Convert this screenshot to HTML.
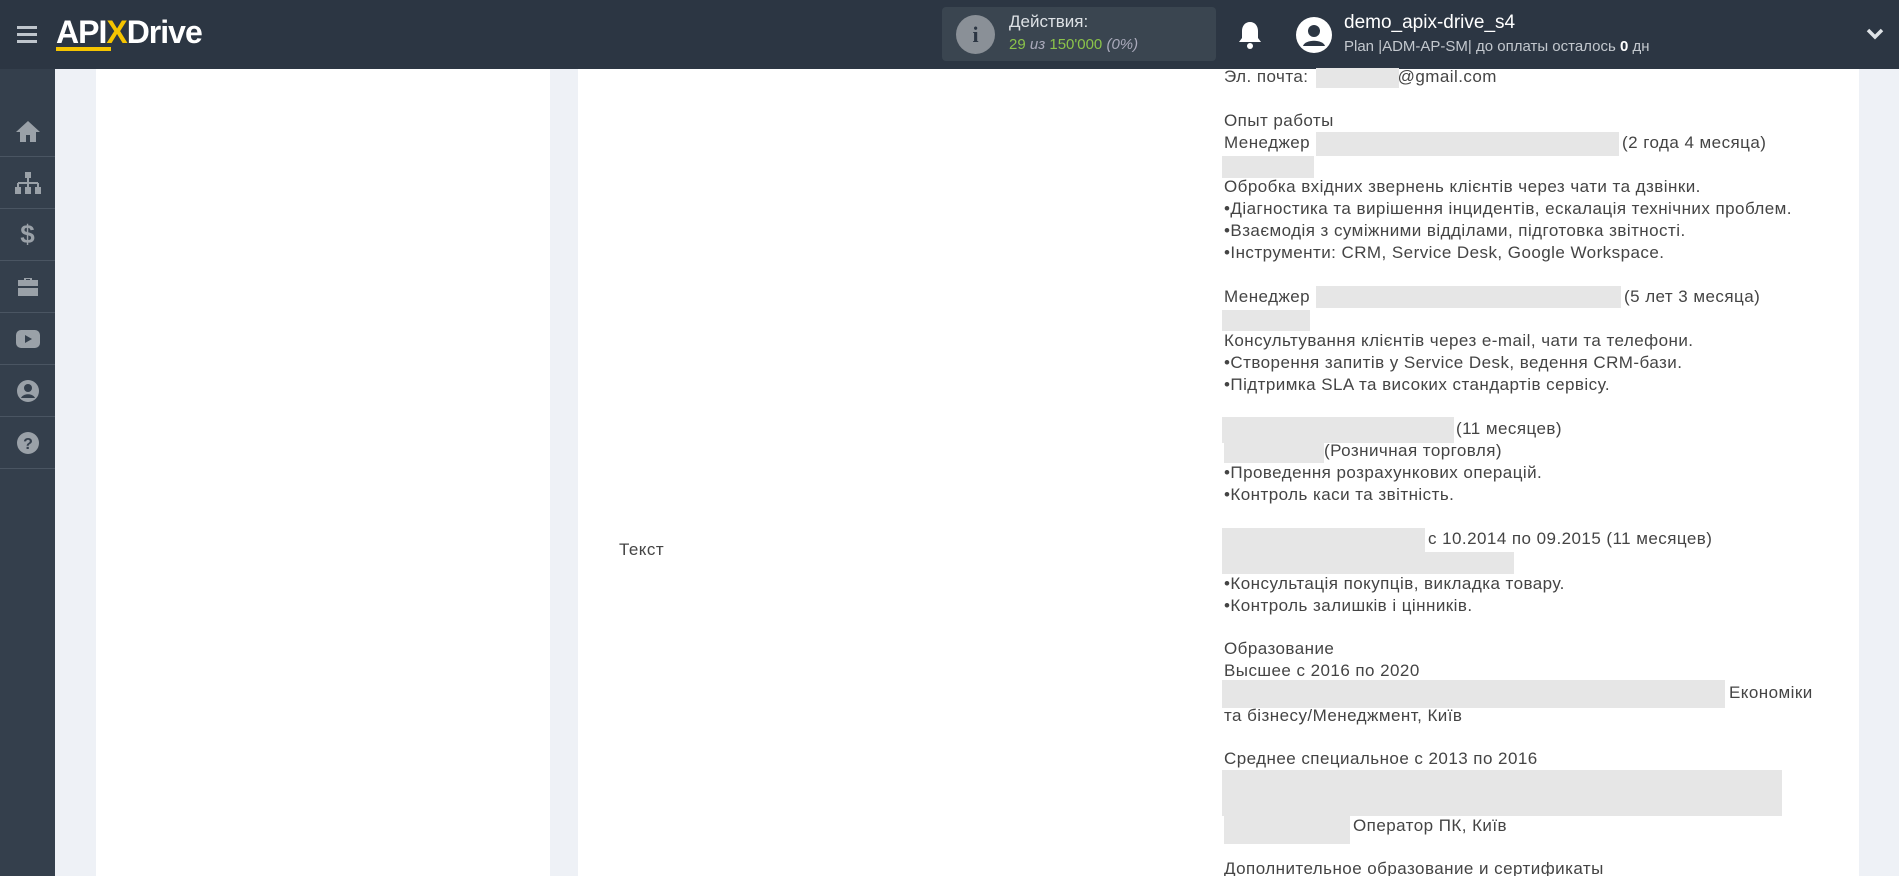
<!DOCTYPE html>
<html><head><meta charset="utf-8"><style>
*{margin:0;padding:0;box-sizing:border-box}
html,body{width:1899px;height:876px;overflow:hidden}
body{background:#eef1f6;font-family:"Liberation Sans",Arial,sans-serif;position:relative}
.hdr{position:absolute;left:0;top:0;width:1899px;height:69px;background:#2c3643}
.sb{position:absolute;left:0;top:69px;width:55px;height:820px;background:#343f4c}
.sb .it{position:absolute;left:0;width:55px;height:52px;border-bottom:1px solid #4a5562;display:flex;align-items:center;justify-content:center}
.p1{position:absolute;left:96px;top:69px;width:454px;height:820px;background:#fff}
.p2{position:absolute;left:578px;top:69px;width:1281px;height:820px;background:#fff}
.l{position:absolute;left:1224px;font-size:17px;letter-spacing:0.45px;color:#444;white-space:nowrap;line-height:22px;height:22px}
.b{position:absolute;background:#e6e6e6}
</style></head><body>
<div class="hdr">
  <div style="position:absolute;left:17px;top:26px;width:20px;height:3px;background:#bfc5cc;box-shadow:0 7px 0 #bfc5cc,0 14px 0 #bfc5cc"></div>
  <div style="position:absolute;left:56px;top:14px;font-size:32px;font-weight:bold;color:#fff;letter-spacing:-1px">API<span style="color:#f5c400">X</span>Drive</div>
  <div style="position:absolute;left:56px;top:47px;width:55px;height:4px;background:#f5c400"></div>
  <div style="position:absolute;left:942px;top:7px;width:274px;height:54px;background:#3a4550;border-radius:4px"></div>
  <div style="position:absolute;left:956px;top:15px;width:39px;height:39px;border-radius:50%;background:#8a9097;color:#2c3643;font-weight:bold;font-size:22px;text-align:center;line-height:39px;font-family:'Liberation Serif',serif">i</div>
  <div style="position:absolute;left:1009px;top:12px;font-size:17px;color:#dde1e5">Действия:</div>
  <div style="position:absolute;left:1009px;top:36px;font-size:15px;color:#8bc34a">29 <i style="color:#aab">из</i> 150'000 <i style="color:#aab">(0%)</i></div>
  <svg style="position:absolute;left:1237px;top:20px" width="26" height="30" viewBox="0 0 26 30"><path d="M13 2c-5 0-8 4-8 9v7l-3 4h22l-3-4v-7c0-5-3-9-8-9z" fill="#fff"/><circle cx="13" cy="26" r="3" fill="#fff"/></svg>
  <svg style="position:absolute;left:1295px;top:16px" width="38" height="38" viewBox="0 0 38 38"><circle cx="19" cy="19" r="18" fill="#fff"/><circle cx="19" cy="15" r="6" fill="#2c3643"/><path d="M8 30c2-7 20-7 22 0" fill="#2c3643"/></svg>
  <div style="position:absolute;left:1344px;top:12px;font-size:19px;color:#fff">demo_apix-drive_s4</div>
  <div style="position:absolute;left:1344px;top:38px;font-size:15px;color:#c3c8ce">Plan |ADM-AP-SM| до оплаты осталось <b style="color:#fff">0</b> дн</div>
  <svg style="position:absolute;left:1866px;top:27px" width="18" height="14" viewBox="0 0 18 14"><path d="M2 3l7 7 7-7" stroke="#dfe3e7" stroke-width="3.5" fill="none"/></svg>
</div>
<div class="sb">
  <div class="it" style="top:36px"><svg width="26" height="24" viewBox="0 0 26 24"><path d="M13 2L1 13h4v10h6v-7h4v7h6V13h4z" fill="#9aa1a8"/></svg></div>
  <div class="it" style="top:88px"><svg width="28" height="24" viewBox="0 0 28 24"><rect x="11" y="1" width="6" height="6" fill="#9aa1a8"/><path d="M14 7v5M4 12h20M4 12v4M14 12v4M24 12v4" stroke="#9aa1a8" stroke-width="2"/><rect x="1" y="16" width="6" height="7" fill="#9aa1a8"/><rect x="11" y="16" width="6" height="7" fill="#9aa1a8"/><rect x="21" y="16" width="6" height="7" fill="#9aa1a8"/></svg></div>
  <div class="it" style="top:140px;font-size:26px;font-weight:bold;color:#9aa1a8">$</div>
  <div class="it" style="top:192px"><svg width="24" height="22" viewBox="0 0 24 22"><path d="M8 4V2h8v2h6v16H2V4z M10 3v1h4V3z" fill="#9aa1a8"/><rect x="2" y="10" width="20" height="2" fill="#343f4c"/></svg></div>
  <div class="it" style="top:244px"><svg width="26" height="20" viewBox="0 0 26 20"><rect x="1" y="1" width="24" height="18" rx="5" fill="#9aa1a8"/><path d="M10 6l7 4-7 4z" fill="#343f4c"/></svg></div>
  <div class="it" style="top:296px"><svg width="24" height="24" viewBox="0 0 24 24"><circle cx="12" cy="12" r="11" fill="#9aa1a8"/><circle cx="12" cy="9" r="4" fill="#343f4c"/><path d="M5 19c2-5 12-5 14 0" fill="#343f4c"/></svg></div>
  <div class="it" style="top:348px"><svg width="24" height="24" viewBox="0 0 24 24"><circle cx="12" cy="12" r="11" fill="#9aa1a8"/><text x="12" y="18" text-anchor="middle" font-size="16" font-weight="bold" fill="#343f4c" font-family="Liberation Sans">?</text></svg></div>
</div>
<div class="p1"></div>
<div class="p2"></div>
<div class="l" style="left:619px;top:539px">Текст</div>

<div class="l" style="top:66px">Эл. почта: <span style="display:inline-block;width:84px"></span>@gmail.com</div>
<div class="b" style="left:1316px;top:68px;width:83px;height:20px"></div>
<div class="l" style="top:110px">Опыт работы</div>
<div class="l" style="top:132px">Менеджер</div><div class="l" style="top:132px;left:1622px">(2 года 4 месяца)</div>
<div class="b" style="left:1316px;top:132px;width:303px;height:24px"></div>
<div class="b" style="left:1222px;top:156px;width:92px;height:22px"></div>
<div class="l" style="top:176px">Обробка вхідних звернень клієнтів через чати та дзвінки.</div>
<div class="l" style="top:198px">•Діагностика та вирішення інцидентів, ескалація технічних проблем.</div>
<div class="l" style="top:220px">•Взаємодія з суміжними відділами, підготовка звітності.</div>
<div class="l" style="top:242px">•Інструменти: CRM, Service Desk, Google Workspace.</div>
<div class="l" style="top:286px">Менеджер</div><div class="l" style="top:286px;left:1624px">(5 лет 3 месяца)</div>
<div class="b" style="left:1316px;top:286px;width:305px;height:22px"></div>
<div class="b" style="left:1222px;top:310px;width:88px;height:21px"></div>
<div class="l" style="top:330px">Консультування клієнтів через e-mail, чати та телефони.</div>
<div class="l" style="top:352px">•Створення запитів у Service Desk, ведення CRM-бази.</div>
<div class="l" style="top:374px">•Підтримка SLA та високих стандартів сервісу.</div>
<div class="l" style="top:418px;left:1456px">(11 месяцев)</div>
<div class="b" style="left:1222px;top:417px;width:232px;height:26px"></div>
<div class="l" style="top:440px;left:1324px">(Розничная торговля)</div>
<div class="b" style="left:1224px;top:441px;width:100px;height:22px"></div>
<div class="l" style="top:462px">•Проведення розрахункових операцій.</div>
<div class="l" style="top:484px">•Контроль каси та звітність.</div>
<div class="l" style="top:528px;left:1428px">с 10.2014 по 09.2015 (11 месяцев)</div>
<div class="b" style="left:1222px;top:528px;width:203px;height:24px"></div>
<div class="b" style="left:1222px;top:552px;width:292px;height:22px"></div>
<div class="l" style="top:573px">•Консультація покупців, викладка товару.</div>
<div class="l" style="top:595px">•Контроль залишків і цінників.</div>
<div class="l" style="top:638px">Образование</div>
<div class="l" style="top:660px">Высшее с 2016 по 2020</div>
<div class="l" style="top:682px;left:1729px">Економіки</div>
<div class="b" style="left:1222px;top:680px;width:503px;height:28px"></div>
<div class="l" style="top:705px">та бізнесу/Менеджмент, Київ</div>
<div class="l" style="top:748px">Среднее специальное с 2013 по 2016</div>
<div class="b" style="left:1222px;top:770px;width:560px;height:46px"></div>
<div class="l" style="top:815px;left:1353px">Оператор ПК, Київ</div>
<div class="b" style="left:1224px;top:816px;width:126px;height:28px"></div>
<div class="l" style="top:858px">Дополнительное образование и сертификаты</div>
</body></html>
